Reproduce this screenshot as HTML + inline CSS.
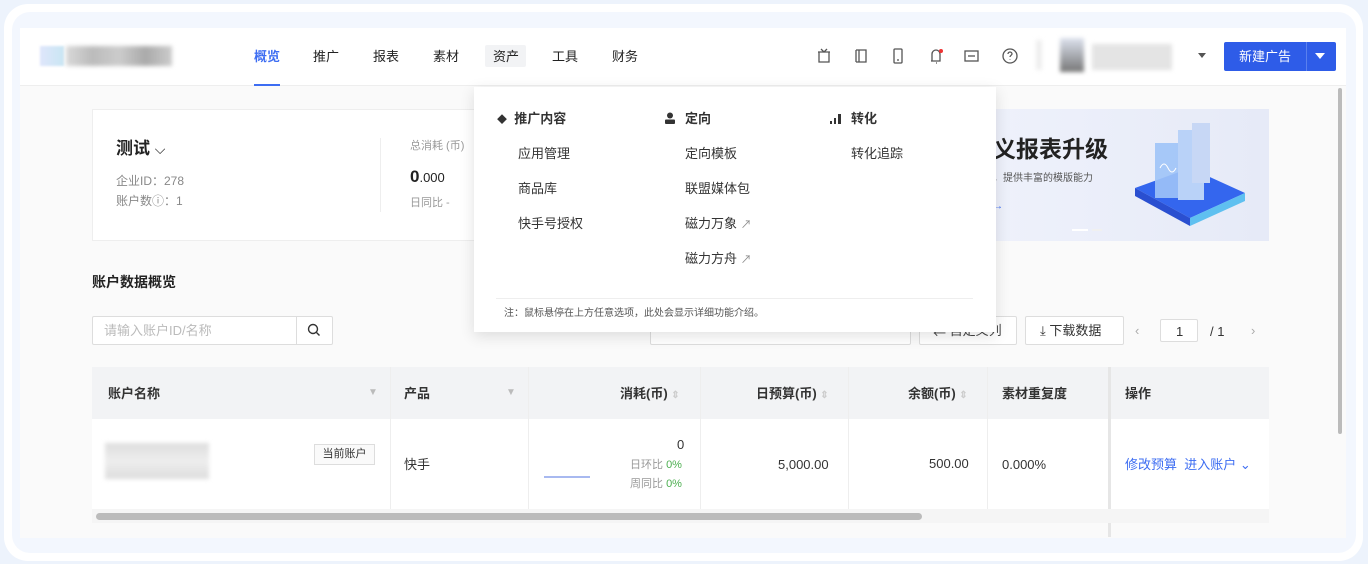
<!DOCTYPE html>
<html><head><meta charset="utf-8"><style>
*{box-sizing:border-box;margin:0;padding:0}
body{width:1368px;height:564px;background:#edf3fc;font-family:"Liberation Sans","Noto Sans CJK SC",sans-serif;color:#333;font-size:13px;position:relative;overflow:hidden}
.a{position:absolute;line-height:1.05}
.outer{left:4px;top:4px;width:1359px;height:557px;background:#fff;border-radius:24px}
.inner{left:12px;top:12px;width:1344px;height:541px;background:#f3f7fe;border-radius:18px}
.content{left:20px;top:28px;width:1326px;height:510px;background:#fafafa}
.hdr{left:20px;top:28px;width:1326px;height:58px;background:#fff;border-bottom:1px solid #eee}
.nav{top:50px;font-size:13px;color:#222}
.blur{background:#ddd;filter:blur(2px)}
.card{background:#fff;border:1px solid #eee}
.dd{left:474px;top:87px;width:522px;height:245px;background:#fff;box-shadow:0 4px 14px rgba(0,0,0,.12)}
.mi{font-size:13px;color:#333}
.th{background:#f2f3f5;height:52px;top:367px}
.btn{background:#fff;border:1px solid #ddd;border-radius:2px}
</style></head><body>
<div class="a outer"></div>
<div class="a inner"></div>
<div class="a content"></div>
<div class="a hdr"></div>
<div class="a" style="left:40px;top:46px;width:24px;height:20px;background:linear-gradient(90deg,#dfe6fb,#c9e6f3);filter:blur(1px)"></div>
<div class="a blur" style="left:66px;top:46px;width:106px;height:20px;background:linear-gradient(90deg,#d9d9d9,#bbb,#ccc,#aaa,#ccc)"></div>
<div class="a nav" style="left:254px;color:#3d6df2;font-weight:bold">概览</div>
<div class="a" style="left:254px;top:84px;width:26px;height:2px;background:#3d6df2"></div>
<div class="a nav" style="left:313px">推广</div>
<div class="a nav" style="left:373px">报表</div>
<div class="a nav" style="left:433px">素材</div>
<div class="a" style="left:485px;top:45px;width:41px;height:22px;background:#f2f3f5;border-radius:2px"></div>
<div class="a nav" style="left:493px">资产</div>
<div class="a nav" style="left:552px">工具</div>
<div class="a nav" style="left:612px">财务</div>
<svg class="a" style="left:815px;top:47px" width="210" height="18" fill="none" stroke="#555" stroke-width="1.3">
<path d="M3 5h12M4 5v10h10V5M6 2l3 3 3-3"/>
<path d="M41 3h10v12H41M41 3v12M44 3v12"/>
<rect x="79" y="2" width="8" height="14" rx="1"/><path d="M82 13h2"/>
<path d="M117 14V7a4 4 0 018 0v7h-9M121 16h1"/>
<circle cx="126" cy="4" r="2" fill="#e33" stroke="none"/>
<rect x="150" y="4" width="13" height="10"/><path d="M153 9h7"/>
<circle cx="195" cy="9" r="7"/><path d="M193 7a2 2 0 114 0c0 1-2 1.5-2 3M195 12.5v.5"/>
</svg>
<div class="a blur" style="left:1036px;top:40px;width:6px;height:30px;background:#eee"></div>
<div class="a blur" style="left:1060px;top:38px;width:24px;height:34px;background:linear-gradient(#dde2ee,#777)"></div>
<div class="a blur" style="left:1092px;top:44px;width:80px;height:26px;background:#e4e4e4"></div>
<div class="a" style="left:1198px;top:53px;border:4px solid transparent;border-top:5px solid #555"></div>
<div class="a" style="left:1224px;top:42px;width:112px;height:29px;background:#2e5ce8;border-radius:2px"></div>
<div class="a" style="left:1239px;top:50px;color:#fff;font-size:13px">新建广告</div>
<div class="a" style="left:1306px;top:42px;width:1px;height:29px;background:#5a80ee"></div>
<div class="a" style="left:1315px;top:53px;border:5px solid transparent;border-top:6px solid #fff"></div>
<div class="a" style="left:1338px;top:88px;width:4px;height:346px;background:#bbb;border-radius:2px"></div>
<div class="a card" style="left:92px;top:109px;width:400px;height:132px"></div>
<div class="a" style="left:116px;top:140px;font-size:17px;font-weight:bold;color:#222">测试 <span style="font-weight:normal;font-size:14px">⌵</span></div>
<div class="a" style="left:116px;top:175px;color:#888;font-size:12px">企业ID：278</div>
<div class="a" style="left:116px;top:195px;color:#888;font-size:12px">账户数ⓘ：1</div>
<div class="a" style="left:380px;top:138px;width:1px;height:74px;background:#eee"></div>
<div class="a" style="left:410px;top:141px;color:#999;font-size:11px">总消耗 (币)</div>
<div class="a" style="left:410px;top:168px;font-size:17px;font-weight:bold;color:#222">0<span style="font-size:13px;font-weight:normal">.000</span></div>
<div class="a" style="left:410px;top:198px;color:#999;font-size:11px">日同比 -</div>
<div class="a" style="left:996px;top:109px;width:273px;height:132px;background:linear-gradient(90deg,#eef1fb,#e6eaf7)"></div>
<div class="a" style="left:993px;top:137px;font-size:23px;font-weight:bold;color:#222">义报表升级</div>
<div class="a" style="left:993px;top:174px;font-size:10px;color:#555">，提供丰富的模版能力</div>
<div class="a" style="left:993px;top:202px;font-size:10px;color:#3d6df2">→</div>
<svg class="a" style="left:1130px;top:118px" width="120" height="110">
<polygon points="5,70 60,50 115,75 60,100" fill="#3466ee"/><polygon points="5,70 60,100 60,108 5,78" fill="#2a4fd0"/><polygon points="60,100 115,75 115,83 60,108" fill="#5fc0f0"/>
<rect x="25" y="25" width="30" height="55" fill="#9ec3f7" opacity=".9"/><rect x="48" y="12" width="26" height="70" fill="#b9d2f8"/><rect x="62" y="5" width="18" height="60" fill="#c7d7f5"/><path d="M30 50q4-8 8 0t8 0" stroke="#fff" fill="none"/>
</svg>
<div class="a" style="left:1072px;top:229px;width:16px;height:2px;background:#fff"></div>
<div class="a" style="left:1092px;top:229px;width:10px;height:2px;background:#f0f0f0"></div>
<div class="a" style="left:92px;top:275px;font-size:14px;font-weight:bold;color:#222">账户数据概览</div>
<div class="a btn" style="left:92px;top:316px;width:241px;height:29px"></div>
<div class="a" style="left:296px;top:316px;width:1px;height:29px;background:#ddd"></div>
<div class="a" style="left:104px;top:324px;color:#bbb;font-size:13px">请输入账户ID/名称</div>
<svg class="a" style="left:307px;top:323px" width="14" height="14" fill="none" stroke="#333" stroke-width="1.4"><circle cx="6" cy="6" r="4.5"/><path d="M9.5 9.5l3 3"/></svg>
<div class="a btn" style="left:650px;top:316px;width:261px;height:29px"></div>
<div class="a btn" style="left:919px;top:316px;width:98px;height:29px"></div>
<div class="a" style="left:933px;top:324px;color:#444">⇄ 自定义列</div>
<div class="a btn" style="left:1025px;top:316px;width:99px;height:29px"></div>
<div class="a" style="left:1040px;top:324px;font-size:13px">⤓ 下载数据</div>
<div class="a" style="left:1135px;top:324px;color:#aaa">‹</div>
<div class="a btn" style="left:1160px;top:319px;width:38px;height:23px"></div>
<div class="a" style="left:1176px;top:325px">1</div>
<div class="a" style="left:1210px;top:325px">/ 1</div>
<div class="a" style="left:1251px;top:324px;color:#aaa">›</div>
<div class="a dd"></div>
<div class="a th" style="left:92px;width:1177px"></div>
<div class="a" style="left:92px;top:419px;width:1177px;height:90px;background:#fff"></div>
<div class="a" style="left:390px;top:367px;width:1px;height:142px;background:#eee"></div>
<div class="a" style="left:528px;top:367px;width:1px;height:142px;background:#eee"></div>
<div class="a" style="left:700px;top:367px;width:1px;height:142px;background:#eee"></div>
<div class="a" style="left:848px;top:367px;width:1px;height:142px;background:#eee"></div>
<div class="a" style="left:987px;top:367px;width:1px;height:142px;background:#eee"></div>
<div class="a" style="left:1108px;top:367px;width:3px;height:170px;background:#e6e6e6"></div>
<div class="a" style="left:92px;top:509px;width:1177px;height:14px;background:#f5f5f5"></div>
<div class="a" style="left:96px;top:513px;width:826px;height:7px;background:#bbb;border-radius:4px"></div>
<div class="a" style="left:108px;top:387px;font-weight:bold;font-size:13px">账户名称</div>
<div class="a" style="left:368px;top:388px;color:#bbb;font-size:10px">▼</div>
<div class="a" style="left:404px;top:387px;font-weight:bold">产品</div>
<div class="a" style="left:506px;top:388px;color:#bbb;font-size:10px">▼</div>
<div class="a" style="left:620px;top:387px;font-weight:bold">消耗(币) <span style="color:#ccc;font-size:10px">⇕</span></div>
<div class="a" style="left:756px;top:387px;font-weight:bold">日预算(币) <span style="color:#ccc;font-size:10px">⇕</span></div>
<div class="a" style="left:908px;top:387px;font-weight:bold">余额(币) <span style="color:#ccc;font-size:10px">⇕</span></div>
<div class="a" style="left:1002px;top:387px;font-weight:bold">素材重复度</div>
<div class="a" style="left:1125px;top:387px;font-weight:bold">操作</div>
<div class="a blur" style="left:105px;top:443px;width:104px;height:36px;background:linear-gradient(#ddd,#eee,#ddd)"></div>
<div class="a" style="left:314px;top:444px;width:61px;height:21px;border:1px solid #ddd;background:#fafafa;font-size:11px;text-align:center;line-height:19px">当前账户</div>
<div class="a" style="left:404px;top:458px">快手</div>
<div class="a" style="left:544px;top:476px;width:46px;height:2px;background:#a8b9f0"></div>
<div class="a" style="left:677px;top:438px">0</div>
<div class="a" style="left:630px;top:460px;font-size:11px;color:#999">日环比 <span style="color:#4caf50">0%</span></div>
<div class="a" style="left:630px;top:479px;font-size:11px;color:#999">周同比 <span style="color:#4caf50">0%</span></div>
<div class="a" style="left:778px;top:458px">5,000.00</div>
<div class="a" style="left:929px;top:457px">500.00</div>
<div class="a" style="left:1002px;top:458px">0.000%</div>
<div class="a" style="left:1125px;top:458px;color:#3d6df2">修改预算&nbsp; 进入账户 ⌄</div>
<div class="a" style="left:497px;top:112px;font-weight:bold;font-size:13px"><span style="font-size:10px">◆</span>&nbsp; 推广内容</div>
<div class="a mi" style="left:518px;top:147px">应用管理</div>
<div class="a mi" style="left:518px;top:182px">商品库</div>
<div class="a mi" style="left:518px;top:217px">快手号授权</div>
<svg class="a" style="left:664px;top:112px" width="12" height="12" fill="#333"><circle cx="6" cy="3.5" r="3"/><rect x="1" y="7.5" width="10" height="4.5" rx="1"/></svg>
<div class="a" style="left:685px;top:112px;font-weight:bold">定向</div>
<div class="a mi" style="left:685px;top:147px">定向模板</div>
<div class="a mi" style="left:685px;top:182px">联盟媒体包</div>
<div class="a mi" style="left:685px;top:217px">磁力万象 <span style="color:#888;font-size:11px">↗</span></div>
<div class="a mi" style="left:685px;top:252px">磁力方舟 <span style="color:#888;font-size:11px">↗</span></div>
<svg class="a" style="left:830px;top:113px" width="12" height="11" fill="#333"><rect x="0" y="8" width="2" height="3"/><rect x="4" y="5" width="2" height="6"/><rect x="8" y="1" width="3" height="10"/></svg>
<div class="a" style="left:851px;top:112px;font-weight:bold">转化</div>
<div class="a mi" style="left:851px;top:147px">转化追踪</div>
<div class="a" style="left:496px;top:298px;width:477px;height:1px;background:#eee"></div>
<div class="a" style="left:504px;top:309px;font-size:10px;color:#555">注：鼠标悬停在上方任意选项，此处会显示详细功能介绍。</div>
</body></html>
